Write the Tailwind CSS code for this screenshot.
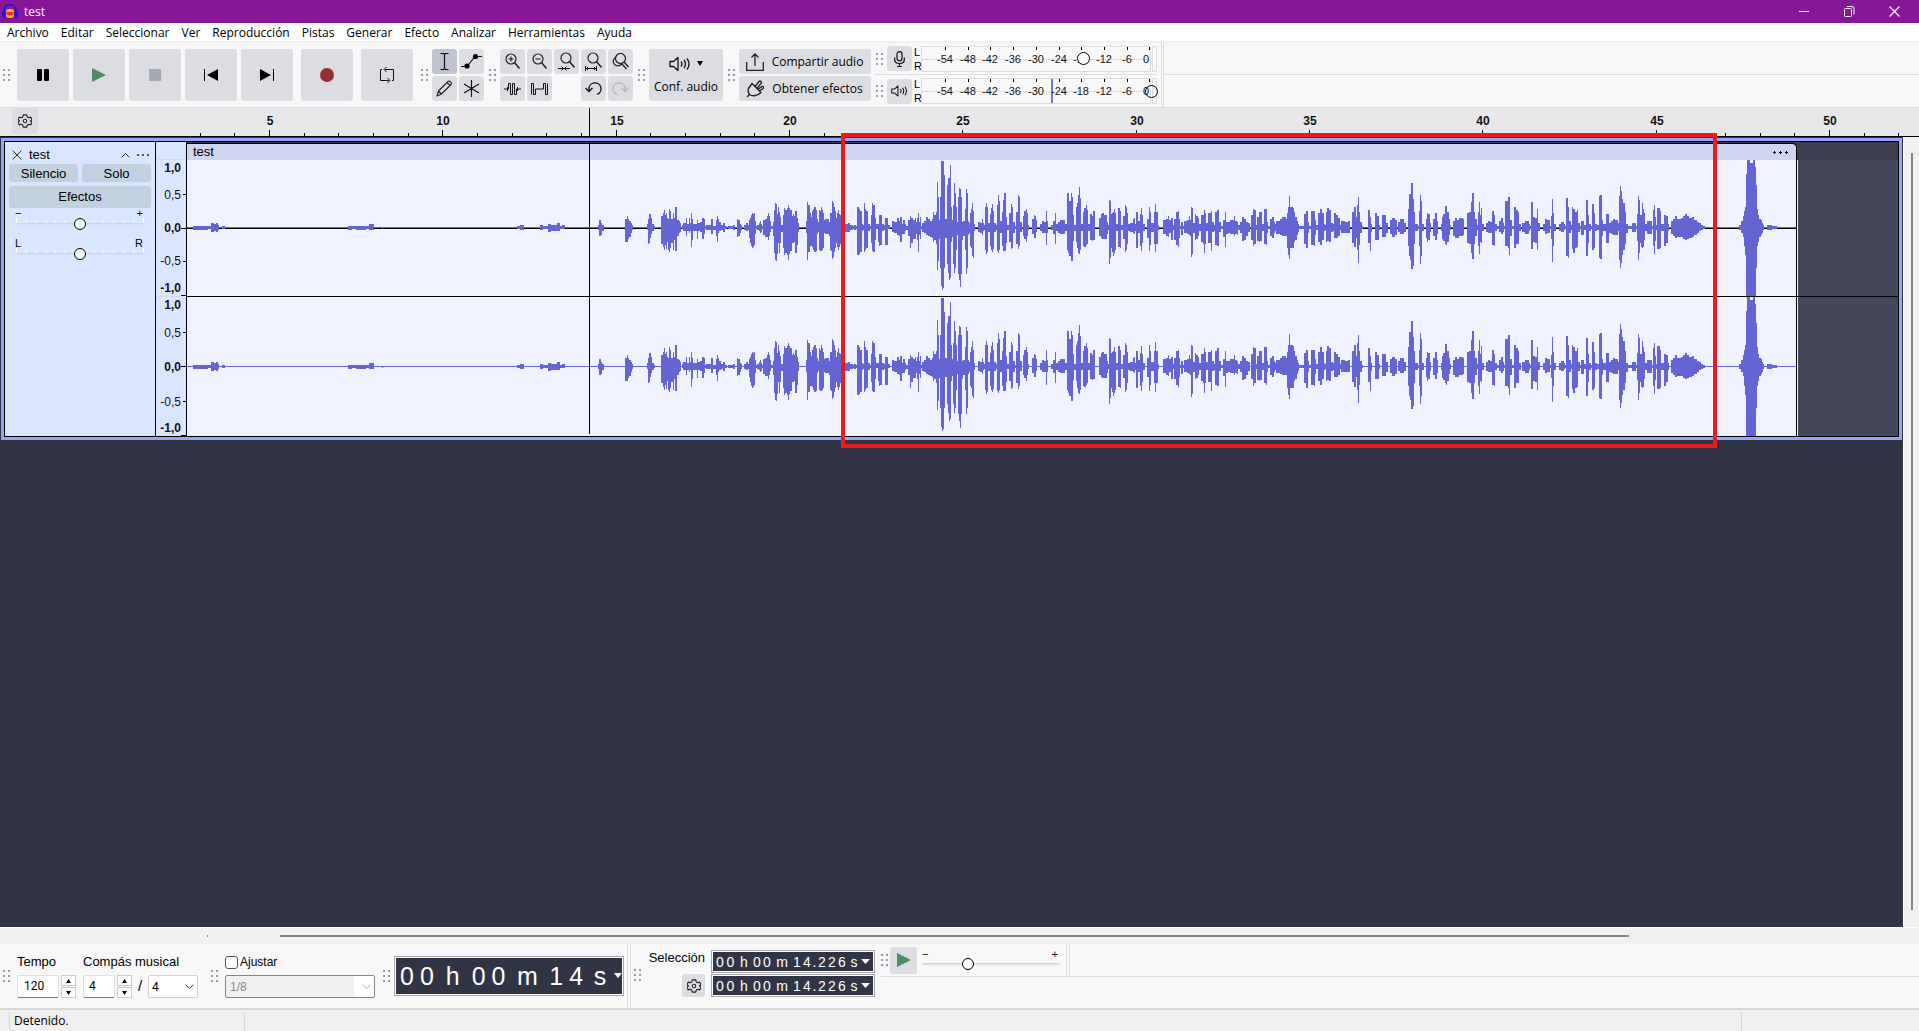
<!DOCTYPE html>
<html lang="es">

<head>
    <meta charset="UTF-8">
    <meta name="viewport" content="width=device-width, initial-scale=1.0">
    <title>test</title>
    <script src="https://cdn.jsdelivr.net/npm/@tailwindcss/browser@4"></script>
</head>

<body class="h-screen flex flex-col overflow-hidden bg-[#f0f0f0] text-black text-[12px] leading-4 font-['Open_Sans',sans-serif]">

    <!-- shared symbols -->
    <svg class="hidden">
        <symbol id="grip" viewBox="0 0 7 12">
            <path fill="#9a9ab0" d="M0 0h2v2h-2zM5 0h2v2h-2zM0 5h2v2h-2zM5 5h2v2h-2zM0 10h2v2h-2zM5 10h2v2h-2z" />
        </symbol>
        <symbol id="gear" viewBox="0 0 16 16">
            <path fill="none" stroke="#222" stroke-width="1.3" stroke-linejoin="round" d="M6 1h4l.6 2.300 1.800 1 2.200-.7 1.400 2.800L14.300 8l1.700 1.600-1.400 2.800-2.200-.7-1.800 1L10 15H6l-.6-2.300-1.800-1-2.200.7L0 9.600 1.700 8 0 6.400l1.400-2.800 2.200.7 1.800-1z" />
            <circle cx="8" cy="8" r="2" fill="none" stroke="#222" stroke-width="1.200" />
        </symbol>
        <symbol id="lens" viewBox="0 0 17 17">
            <circle cx="7" cy="6" r="5" fill="none" stroke="#222" stroke-width="1.200" />
            <path stroke="#222" stroke-width="1.500" d="M10.500 9.500l5 6" />
        </symbol>
        <symbol id="speaker" viewBox="0 0 22 16">
            <path fill="none" stroke="#111" stroke-width="1.300" stroke-linejoin="round" d="M1 5.500h3.500L9 1.500v13L4.500 10.500H1z" />
            <path fill="none" stroke="#111" stroke-width="1.300" d="M12 5.500q2 2.500 0 5M15 4q3 4 0 8M18 2.500q4 5.500 0 11" />
        </symbol>
        <symbol id="ticks" viewBox="0 0 131 5" preserveAspectRatio="none">
            <path stroke="#fff" d="M1.500 0v5M11.500 2v3M21.500 2v3M31.500 2v3M40.500 2v3M50.500 2v3M60.500 2v3M70.500 2v3M79.500 2v3M89.500 2v3M99.500 2v3M109.500 2v3M119.500 2v3M129.500 0v5" />
        </symbol>
    </svg>

    <header class="h-[23px] shrink-0 flex items-center bg-[#881798] text-white">
        <svg class="ml-[2px] w-4 h-[15px]" viewBox="0 0 16 15">
            <path fill="none" stroke="#1414e6" stroke-width="1.500" d="M2 8V7q0-6.200 6-6.200T14 7v1" />
            <path fill="#1414e6" d="M3.500 6.500v8Q0 14 0 10.500t3.500-4zM12.500 6.500v8q3.500-.5 3.500-4t-3.500-4z" />
            <rect x="4" y="5" width="8" height="9" rx="3" fill="#ffa51e" />
            <path stroke="#e6331e" stroke-width="3" d="M4.500 9.500h7" />
        </svg>
        <h1 class="ml-[6px] flex-1">test</h1>
        <button aria-label="Minimizar" class="w-[45px] h-full flex items-center justify-center"><svg class="w-[11px] h-[11px]" viewBox="0 0 11 11"><path stroke="#fff" d="M0 5.500h10" /></svg></button>
        <button aria-label="Restaurar" class="w-[45px] h-full flex items-center justify-center"><svg class="w-[11px] h-[11px]" viewBox="0 0 11 11"><path fill="none" stroke="#fff" d="M.5 3.500q0-1 1-1h5q1 0 1 1v6q0 1-1 1h-5q-1 0-1-1zM3 .5h5q2 0 2 2v6" /></svg></button>
        <button aria-label="Cerrar" class="mr-[2px] w-[45px] h-full flex items-center justify-center"><svg class="w-[11px] h-[11px]" viewBox="0 0 11 11"><path stroke="#fff" stroke-width="1.200" d="M.5.500l10 10M10.500.500l-10 10" /></svg></button>
    </header>

    <nav class="h-5 shrink-0 bg-white border-b-2 border-[#f0f0f0] flex items-end gap-3 pl-[7px]">
        <a href="#">Archivo</a>
        <a href="#">Editar</a>
        <a href="#">Seleccionar</a>
        <a href="#">Ver</a>
        <a href="#">Reproducción</a>
        <a href="#">Pistas</a>
        <a href="#">Generar</a>
        <a href="#">Efecto</a>
        <a href="#">Analizar</a>
        <a href="#">Herramientas</a>
        <a href="#">Ayuda</a>
    </nav>

    <section aria-label="Herramientas" class="h-[65px] shrink-0 flex items-stretch bg-[#f8f8f8] border-b border-[#dcdcde]">
        <div class="flex items-center">
            <svg class="ml-[3px] mr-[7px] w-[7px] h-3"><use href="#grip" /></svg>
            <div class="flex gap-1">
                <button aria-label="Pausa" class="w-[52px] h-[52px] rounded-[3px] bg-[#dcdde3] flex items-center justify-center"><svg class="w-3 h-3" viewBox="0 0 12 12"><rect width="5" height="12" rx="1" /><rect x="7" width="5" height="12" rx="1" /></svg></button>
                <button aria-label="Reproducir" class="w-[52px] h-[52px] rounded-[3px] bg-[#dcdde3] flex items-center justify-center"><svg class="w-[14px] h-[14px]" viewBox="0 0 14 14"><path fill="#4a8b69" d="M0 0l14 7-14 7z" /></svg></button>
                <button aria-label="Detener" class="w-[52px] h-[52px] rounded-[3px] bg-[#dcdde3] flex items-center justify-center"><svg class="w-3 h-3" viewBox="0 0 12 12"><rect width="12" height="12" fill="#a5a9b3" /></svg></button>
                <button aria-label="Ir al inicio" class="w-[52px] h-[52px] rounded-[3px] bg-[#dcdde3] flex items-center justify-center"><svg class="w-[14px] h-3" viewBox="0 0 14 12"><path d="M0 0h1v12H0zM14 0v12L3 6z" /></svg></button>
                <button aria-label="Ir al final" class="w-[52px] h-[52px] rounded-[3px] bg-[#dcdde3] flex items-center justify-center"><svg class="w-[14px] h-3" viewBox="0 0 14 12"><path d="M13 0h1v12h-1zM0 0v12l11-6z" /></svg></button>
            </div>
            <button aria-label="Grabar" class="ml-2 w-[52px] h-[52px] rounded-[3px] bg-[#dcdde3] flex items-center justify-center"><svg class="w-[14px] h-[14px]" viewBox="0 0 14 14"><circle cx="7" cy="7" r="7" fill="#942f32" /></svg></button>
            <button aria-label="Bucle" class="ml-2 w-[52px] h-[52px] rounded-[3px] bg-[#dcdde3] flex items-center justify-center"><svg class="w-4 h-4" viewBox="0 0 16 16"><path fill="none" stroke="#111" d="M3 2.500H1.500v11H10M8.500 11l2.500 2.500L8.500 16M13 13.500h1.500v-11H6M7.500 0L5 2.500 7.500 5" /></svg></button>

            <svg class="ml-2 mr-1 w-[7px] h-3"><use href="#grip" /></svg>
            <div class="grid grid-cols-2 gap-[2px]">
                <button aria-label="Herramienta de selección" class="size-[25px] rounded-[3px] bg-[#c0c2d0] flex items-center justify-center"><svg class="size-[19px]" viewBox="0 0 19 19"><path fill="none" stroke="#111" stroke-width="1.200" d="M5.500 1.500h3l1 1 1-1h3M9.500 2v15M5.500 17.500h3l1-1 1 1h3" /></svg></button>
                <button aria-label="Envolvente" class="size-[25px] rounded-[3px] bg-[#dcdde3] flex items-center justify-center"><svg class="size-[21px]" viewBox="0 0 21 21"><path fill="none" stroke="#111" stroke-width="1.200" d="M0 15.500h6l8-10h7" /><circle cx="6" cy="15" r="2.600" /><circle cx="14.500" cy="5.500" r="2.600" /></svg></button>
                <button aria-label="Dibujo" class="size-[25px] rounded-[3px] bg-[#dcdde3] flex items-center justify-center"><svg class="size-[17px]" viewBox="0 0 17 17"><path fill="none" stroke="#222" stroke-width="1.100" stroke-linejoin="round" d="M1 16l1.500-5L12 1.500q1-1 2 0l1 1q1 1 0 2L5.500 14zM2.500 11l3 3M11 2.500l3 3" /></svg></button>
                <button aria-label="Multiherramienta" class="size-[25px] rounded-[3px] bg-[#dcdde3] flex items-center justify-center"><svg class="size-[17px]" viewBox="0 0 17 17"><path stroke="#111" stroke-width="1.200" d="M8.500 0v17M1 4l15 9M16 4L1 13" /></svg></button>
            </div>

            <svg class="ml-[5px] mr-1 w-[7px] h-3"><use href="#grip" /></svg>
            <div class="grid grid-cols-5 gap-[2px]">
                <button aria-label="Acercar" class="size-[25px] rounded-[3px] bg-[#dcdde3] flex items-center justify-center"><svg class="size-[17px]" viewBox="0 0 17 17"><use href="#lens" width="17" height="17" /><path stroke="#111" d="M4.500 6h5M7 3.500v5" /></svg></button>
                <button aria-label="Alejar" class="size-[25px] rounded-[3px] bg-[#dcdde3] flex items-center justify-center"><svg class="size-[17px]" viewBox="0 0 17 17"><use href="#lens" width="17" height="17" /><path stroke="#111" d="M4.500 6h5" /></svg></button>
                <button aria-label="Ajustar selección" class="size-[25px] rounded-[3px] bg-[#dcdde3] flex items-center justify-center"><svg class="size-[19px]" viewBox="0 0 19 19"><use href="#lens" x="2" width="17" height="17" /><path fill="none" stroke="#111" d="M1 16.500h12M4.500 14.500l2 2-2 2M9.500 14.500l-2 2 2 2" /></svg></button>
                <button aria-label="Ajustar proyecto" class="size-[25px] rounded-[3px] bg-[#dcdde3] flex items-center justify-center"><svg class="size-[19px]" viewBox="0 0 19 19"><use href="#lens" x="2" width="17" height="17" /><path fill="none" stroke="#111" d="M1 16.500h12M1.500 14v5M12.500 14v5M4 15l-1.500 1.500L4 18M10 15l1.500 1.500L10 18" /></svg></button>
                <button aria-label="Alternar zoom" class="size-[25px] rounded-[3px] bg-[#dcdde3] flex items-center justify-center"><svg class="size-[17px]" viewBox="0 0 17 17"><circle cx="8.500" cy="5.500" r="5" fill="none" stroke="#222" stroke-width="1.200" /><path fill="none" stroke="#222" stroke-width="1.300" d="M12 9l4.500 5M4 4a4.600 4.600 0 1 0 5.500 7M9 10l5.500 6" /></svg></button>
                <button aria-label="Recortar" class="size-[25px] rounded-[3px] bg-[#dcdde3] flex items-center justify-center"><svg class="w-[17px] h-3" viewBox="0 0 17 12"><path fill="none" stroke="#111" stroke-linejoin="round" d="M0 6h3.500M3.500 4v4M3.500 6h1V.500h2v11h2V.500h2v11h2V6H17M13.500 4v4" /></svg></button>
                <button aria-label="Silenciar" class="size-[25px] rounded-[3px] bg-[#dcdde3] flex items-center justify-center"><svg class="w-[17px] h-3" viewBox="0 0 17 12"><path fill="none" stroke="#111" stroke-linejoin="round" d="M.5 11.500V.500h2v11h2V6h8V.500h2v11h2V.500" /></svg></button>
                <span></span>
                <button aria-label="Deshacer" class="size-[25px] rounded-[3px] bg-[#dcdde3] flex items-center justify-center"><svg class="w-[17px] h-[14px]" viewBox="0 0 17 14"><path fill="none" stroke="#111" stroke-width="1.300" d="M4 9V7a6 6 0 1 1 8 5.500M.500 6L4 9.500 7.500 6" /></svg></button>
                <button aria-label="Rehacer" disabled class="size-[25px] rounded-[3px] bg-[#dcdde3] flex items-center justify-center"><svg class="w-[17px] h-[14px]" viewBox="0 0 17 14"><path fill="none" stroke="#b4b5bb" stroke-width="1.300" d="M13 9V7a6 6 0 1 0-8 5.500M16.500 6L13 9.500 9.500 6" /></svg></button>
            </div>

            <svg class="ml-[5px] mr-1 w-[7px] h-3"><use href="#grip" /></svg>
            <button class="w-[74px] h-[52px] rounded-[3px] bg-[#dcdde3] flex flex-col items-center justify-center gap-[7px]">
                <span class="flex items-center gap-[6px]"><svg class="w-[22px] h-4"><use href="#speaker" /></svg><svg class="w-[6px] h-[5px]" viewBox="0 0 6 5"><path d="M0 0h6L3 5z" /></svg></span>
                <span class="whitespace-nowrap">Conf. audio</span>
            </button>

            <svg class="ml-[5px] mr-1 w-[7px] h-3"><use href="#grip" /></svg>
            <div class="flex flex-col gap-[2px]">
                <button class="w-[132px] h-[25px] rounded-[3px] bg-[#dcdde3] flex items-center pl-[7px]"><svg class="w-[18px] h-[18px]" viewBox="0 0 18 18"><path fill="none" stroke="#222" stroke-width="1.300" d="M.7 9v8.300h16.600V9M9 13V1M5.500 4.500L9 1l3.500 3.500" /></svg><span class="flex-1 text-center">Compartir audio</span></button>
                <button class="w-[132px] h-[25px] rounded-[3px] bg-[#dcdde3] flex items-center pl-[7px]"><svg class="w-[18px] h-[18px]" viewBox="0 0 18 18"><path fill="none" stroke="#222" stroke-width="1.400" stroke-linejoin="round" d="M1 17l2.500-2.500M6 3.500l9 9q-3 3-6.500 3.300-3 .2-5-1.300Q1.500 12 2.500 8.500L6 3.500zM9 6.500l4-5q1-1 2 0t0 2l-4 5M12 9.500l4-3q1-.5 1.500.5T16.500 9l-3 2" /></svg><span class="flex-1 text-center">Obtener efectos</span></button>
            </div>
        </div>

        <div class="ml-[3px] mr-1 flex flex-col font-['Liberation_Sans',sans-serif]">
            <div class="h-8 flex items-center border-b border-[#dcdcde]">
                <svg class="ml-[2px] mr-1 w-[7px] h-3"><use href="#grip" /></svg>
                <button aria-label="Nivel de grabación" class="size-[25px] rounded-[3px] bg-[#dcdde3] flex items-center justify-center"><svg class="w-[11px] h-4" viewBox="0 0 11 16"><rect x="3" y=".7" width="5" height="9" rx="2.500" fill="none" stroke="#111" stroke-width="1.200" /><path fill="none" stroke="#111" stroke-width="1.200" d="M.7 6.500v2q0 4 4.800 4t4.800-4v-2M5.500 12.500v3M3 15.500h5" /></svg></button>
                <div class="w-[9px] pl-[2px] text-[11px] leading-[14px]">L<br>R</div>
                <div class="relative">
                    <svg data-meter class="w-[236px] h-[26px]" viewBox="0 0 236 26"></svg>
                    <input type="range" aria-label="Volumen de grabación" min="0" max="1000" value="706" class="absolute left-0 top-0 w-[234px] h-[26px] appearance-none bg-transparent [&::-webkit-slider-thumb]:appearance-none [&::-webkit-slider-thumb]:size-[13px] [&::-webkit-slider-thumb]:rounded-full [&::-webkit-slider-thumb]:border [&::-webkit-slider-thumb]:border-black [&::-webkit-slider-thumb]:bg-white">
                </div>
            </div>
            <div class="h-8 flex items-center">
                <svg class="ml-[2px] mr-1 w-[7px] h-3"><use href="#grip" /></svg>
                <button aria-label="Nivel de reproducción" class="size-[25px] rounded-[3px] bg-[#dcdde3] flex items-center justify-center"><svg class="w-[17px] h-[14px]"><use href="#speaker" /></svg></button>
                <div class="w-[9px] pl-[2px] text-[11px] leading-[14px]">L<br>R</div>
                <div class="relative">
                    <svg data-meter="130" class="w-[236px] h-[26px]" viewBox="0 0 236 26"></svg>
                    <input type="range" aria-label="Volumen de reproducción" min="0" max="100" value="100" class="absolute left-0 top-0 w-[237px] h-[26px] appearance-none bg-transparent [&::-webkit-slider-thumb]:appearance-none [&::-webkit-slider-thumb]:size-[13px] [&::-webkit-slider-thumb]:rounded-full [&::-webkit-slider-thumb]:border [&::-webkit-slider-thumb]:border-black">
                </div>
            </div>
        </div>
        <div class="w-[3px] border-x border-[#dcdcde]"></div>
        <div class="flex-1"><div class="h-8 border-b border-[#dcdcde]"></div></div>
    </section>

    <div class="relative flex-1 min-h-0 flex flex-col">
        <!-- timeline -->
        <div class="relative h-[29px] shrink-0 bg-[#e8e8ea] border-b border-black">
            <button aria-label="Opciones de línea de tiempo" class="ml-3 w-[26px] h-[26px] rounded-[3px] bg-[#dcdde3] flex items-center justify-center"><svg class="w-[14px] h-[14px]"><use href="#gear" /></svg></button>
            <svg id="timeline" class="absolute inset-0 w-full h-full font-['Liberation_Sans',sans-serif] pointer-events-none"></svg>
        </div>

        <div class="flex-1 min-h-0 flex">
            <main class="flex-1 min-w-0 bg-[#313445] font-['Liberation_Sans',sans-serif] text-[13px]">
                <div class="mx-px mt-px border-[3px] border-[#97a5f8]">
                    <div class="flex border border-black bg-[#444659]">
                        <div class="w-[151px] shrink-0 border-r border-black bg-[#dae6ff] px-1 pt-1">
                            <div class="flex items-center h-[18px]">
                                <button aria-label="Cerrar pista" class="ml-[3px]"><svg class="w-[10px] h-[10px]" viewBox="0 0 10 10"><path stroke="#333" d="M.5.500l9 9M9.500.500l-9 9" /></svg></button>
                                <h2 class="ml-[7px] flex-1">test</h2>
                                <button aria-label="Contraer"><svg class="w-[9px] h-[6px]" viewBox="0 0 9 6"><path fill="none" stroke="#333" d="M.5 5.500l4-4 4 4" /></svg></button>
                                <button aria-label="Menú de pista" class="ml-[7px] mr-[2px]"><svg class="w-3 h-[2px]" viewBox="0 0 12 2"><path fill="#555" d="M0 0h2v2H0zM5 0h2v2H5zM10 0h2v2h-2z" /></svg></button>
                            </div>
                            <div class="flex gap-1">
                                <button class="flex-1 h-[18px] pt-[2px] rounded-[3px] bg-[#c2d1e0]">Silencio</button>
                                <button class="flex-1 h-[18px] pt-[2px] rounded-[3px] bg-[#c2d1e0]">Solo</button>
                            </div>
                            <button class="mt-1 w-full h-[22px] rounded-[3px] bg-[#c2d1e0]">Efectos</button>
                            <div class="px-[6px]">
                                <div class="flex justify-between text-[11px] leading-[10px]"><span>−</span><span class="pr-[2px]">+</span></div>
                                <div class="relative h-3">
                                    <svg class="w-full h-[5px]"><use href="#ticks" width="100%" height="5" /></svg>
                                    <input type="range" aria-label="Ganancia" class="absolute inset-0 w-full h-3 appearance-none bg-linear-to-b from-transparent from-[5px] via-[#c2d1e0] via-[5px] to-transparent to-[7px] [&::-webkit-slider-thumb]:appearance-none [&::-webkit-slider-thumb]:size-3 [&::-webkit-slider-thumb]:rounded-full [&::-webkit-slider-thumb]:border [&::-webkit-slider-thumb]:border-black [&::-webkit-slider-thumb]:bg-[#f8f8f8]">
                                </div>
                            </div>
                            <div class="mt-2 px-[6px]">
                                <div class="flex justify-between text-[11px] leading-[10px]"><span>L</span><span class="pr-[2px]">R</span></div>
                                <div class="relative h-3">
                                    <svg class="w-full h-[5px]"><use href="#ticks" width="100%" height="5" /></svg>
                                    <input type="range" aria-label="Panorama" class="absolute inset-0 w-full h-3 appearance-none bg-linear-to-b from-transparent from-[5px] via-[#c2d1e0] via-[5px] to-transparent to-[7px] [&::-webkit-slider-thumb]:appearance-none [&::-webkit-slider-thumb]:size-3 [&::-webkit-slider-thumb]:rounded-full [&::-webkit-slider-thumb]:border [&::-webkit-slider-thumb]:border-black [&::-webkit-slider-thumb]:bg-[#f8f8f8]">
                                </div>
                            </div>
                        </div>

                        <div class="w-[31px] shrink-0 border-r border-black bg-[#dae6ff]">
                            <svg id="scale" class="block w-[30px] h-[294px]" viewBox="0 0 30 294"></svg>
                        </div>

                        <div class="relative flex-1 min-w-0 bg-[#3c3d4e]">
                            <div class="mt-px h-[17px] border-t border-r border-black rounded-tr-[5px] bg-[#ced6f2] flex items-center justify-between pl-[6px] pr-2">
                                <h3>test</h3>
                                <button aria-label="Opciones de clip"><svg class="w-[15px] h-[3px]" viewBox="0 0 15 3"><path d="M1 0h1v1h1v1H2v1H1V2H0V1h1zM7 0h1v1h1v1H8v1H7V2H6V1h1zM13 0h1v1h1v1h-1v1h-1V2h-1V1h1z" /></svg></button>
                            </div>
                            <svg data-wave="67" data-gain="1" data-half="68" class="block w-full h-[136px] bg-[#f0f2ff] border-r border-black" viewBox="187 0 1609 136" preserveAspectRatio="none" shape-rendering="crispEdges"></svg>
                            <div class="h-px bg-black"></div>
                            <svg data-wave="69" data-gain="1.030" data-half="70" class="block w-full h-[139px] bg-[#f0f2ff] border-r border-black" viewBox="187 0 1609 139" preserveAspectRatio="none" shape-rendering="crispEdges"></svg>
                            <div class="absolute left-[402px] top-0 w-px h-[292px] bg-black"></div>
                        </div>
                        <div class="w-[101px] shrink-0">
                            <div class="h-[18px] bg-[#3c3d4e]"></div>
                            <div class="h-[136px] border-l border-[#f0f2ff]"></div>
                            <div class="h-px bg-black"></div>
                            <div class="h-[139px] border-l border-[#f0f2ff]"></div>
                        </div>
                    </div>
                </div>
            </main>
            <div class="w-4 shrink-0 border-l border-white bg-[#f0f0f0] flex justify-center pt-4 pb-[17px]"><div class="w-[2px] bg-[#868686]"></div></div>
        </div>

        <div class="h-[17px] shrink-0 border-t border-white bg-[#f0f0f0] flex items-center">
            <div class="ml-[207px] w-px h-[2px] bg-[#868886]"></div>
            <div class="ml-[72px] mr-[290px] flex-1 h-[2px] bg-[#868886]"></div>
        </div>

        <!-- highlighted range -->
        <div class="absolute left-[841px] right-[202px] top-[25px] h-[315px] border-4 border-[#e81c1c] pointer-events-none"></div>
    </div>

    <section aria-label="Tiempo" class="h-16 shrink-0 flex bg-[#f8f8f8] font-['Liberation_Sans',sans-serif] text-[13px]">
        <div class="flex items-center">
            <svg class="ml-[3px] mr-[7px] w-[7px] h-3"><use href="#grip" /></svg>
            <div class="w-[59px] mr-[7px]">
                <label for="tempo" class="block h-[21px]">Tempo</label>
                <div class="flex gap-[2px] text-[12px]">
                    <input id="tempo" value="120" class="w-[42px] h-[23px] pl-[6px] pb-px bg-white border border-[#e0e0e0] border-b-[#777] rounded-[2px] font-['Roboto',sans-serif]">
                    <div class="flex flex-col gap-px">
                        <button aria-label="Subir tempo" class="w-[15px] h-[11px] border border-[#ccc] bg-white flex items-center justify-center"><svg class="w-[5px] h-1" viewBox="0 0 5 4"><path d="M0 4h5L2.500 0z" /></svg></button>
                        <button aria-label="Bajar tempo" class="w-[15px] h-[11px] border border-[#ccc] bg-white flex items-center justify-center"><svg class="w-[5px] h-1" viewBox="0 0 5 4"><path d="M0 0h5L2.500 4z" /></svg></button>
                    </div>
                </div>
            </div>
            <div>
                <label for="beats" class="block h-[21px]">Compás musical</label>
                <div class="flex gap-[2px] text-[12px]">
                    <input id="beats" value="4" class="w-8 h-[23px] pl-[5px] pb-px bg-white border border-[#e0e0e0] border-b-[#777] rounded-[2px] font-['Roboto',sans-serif]">
                    <div class="flex flex-col gap-px">
                        <button aria-label="Subir compás" class="w-[15px] h-[11px] border border-[#ccc] bg-white flex items-center justify-center"><svg class="w-[5px] h-1" viewBox="0 0 5 4"><path d="M0 4h5L2.500 0z" /></svg></button>
                        <button aria-label="Bajar compás" class="w-[15px] h-[11px] border border-[#ccc] bg-white flex items-center justify-center"><svg class="w-[5px] h-1" viewBox="0 0 5 4"><path d="M0 0h5L2.500 4z" /></svg></button>
                    </div>
                    <span class="w-3 text-center text-[15px] leading-[22px]">/</span>
                    <div class="relative">
                        <select aria-label="Figura" class="block w-[50px] h-[23px] pl-[3px] appearance-none bg-white border border-[#d0d0d0] rounded-[2px] font-['Roboto',sans-serif]"><option>4</option></select>
                        <svg class="absolute right-1 top-[9px] w-[9px] h-[6px] pointer-events-none" viewBox="0 0 9 6"><path fill="none" stroke="#444" d="M.5.500l4 4 4-4" /></svg>
                    </div>
                </div>
            </div>

            <svg class="ml-[13px] mr-[7px] w-[7px] h-3"><use href="#grip" /></svg>
            <div>
                <div class="flex items-center h-[21px] pb-[5px] gap-[2px]">
                    <input id="snap" type="checkbox" class="size-[13px] appearance-none bg-white border border-[#555] rounded-[3px]">
                    <label for="snap" class="text-[12px]">Ajustar</label>
                </div>
                <div class="relative">
                    <select aria-label="Ajustar a" disabled class="block w-[150px] h-[23px] pl-1 appearance-none bg-white border border-[#868686] rounded-[2px] text-[#888] text-[12px] bg-linear-to-r from-[#f0f0f0] from-[128px] to-white to-[128px]"><option>1/8</option></select>
                    <svg class="absolute right-1 top-[9px] w-[9px] h-[6px] pointer-events-none" viewBox="0 0 9 6"><path fill="none" stroke="#bbb" d="M.5.500l4 4 4-4" /></svg>
                </div>
            </div>

            <svg class="ml-2 mr-1 w-[7px] h-3"><use href="#grip" /></svg>
            <div class="w-[230px] h-10 p-px border border-[#a6a6ac] bg-white">
                <div class="h-full pb-px bg-[#313445] text-white flex items-center pl-px text-[25px] leading-7 text-center">
                    <span class="w-5">0</span><span class="w-5">0</span><span class="w-8">h</span><span class="w-5">0</span><span class="w-5">0</span><span class="w-[38px]">m</span><span class="w-5">1</span><span class="w-5">4</span><span class="w-7">s</span>
                    <svg class="w-2 h-[5px]" viewBox="0 0 8 5"><path fill="#fff" d="M0 0h8L4 5z" /></svg>
                </div>
            </div>
        </div>
        <div class="ml-[3px] w-1 border-x border-[#dcdcde]"></div>

        <div class="flex items-start pt-[6px]">
            <svg class="mt-[19px] ml-[3px] mr-[7px] w-[7px] h-3"><use href="#grip" /></svg>
            <div class="w-[57px] flex flex-col items-end">
                <span class="h-6">Selección</span>
                <button aria-label="Opciones de selección" class="w-[23px] h-[23px] rounded-[2px] bg-[#dcdde3] flex items-center justify-center"><svg class="w-[14px] h-[14px]"><use href="#gear" /></svg></button>
            </div>
            <div class="ml-[6px] flex flex-col gap-px">
                <div class="w-[164px] h-[23px] p-px border border-[#a6a6ac] bg-white">
                    <div class="h-full bg-[#313445] text-white flex items-center pl-[2px] text-[14px] text-center">
                        <span class="w-[10px]">0</span><span class="w-[11px]">0</span><span class="w-4">h</span><span class="w-[10px]">0</span><span class="w-[10px]">0</span><span class="w-5">m</span><span class="w-[10px]">1</span><span class="w-[10px]">4</span><span class="w-[5px]">.</span><span class="w-[10px]">2</span><span class="w-[10px]">2</span><span class="w-[10px]">6</span><span class="w-[14px]">s</span>
                        <svg class="w-[9px] h-[5px]" viewBox="0 0 9 5"><path fill="#fff" d="M0 0h9L4.500 5z" /></svg>
                    </div>
                </div>
                <div class="w-[164px] h-[23px] p-px border border-[#a6a6ac] bg-white">
                    <div class="h-full bg-[#313445] text-white flex items-center pl-[2px] text-[14px] text-center">
                        <span class="w-[10px]">0</span><span class="w-[11px]">0</span><span class="w-4">h</span><span class="w-[10px]">0</span><span class="w-[10px]">0</span><span class="w-5">m</span><span class="w-[10px]">1</span><span class="w-[10px]">4</span><span class="w-[5px]">.</span><span class="w-[10px]">2</span><span class="w-[10px]">2</span><span class="w-[10px]">6</span><span class="w-[14px]">s</span>
                        <svg class="w-[9px] h-[5px]" viewBox="0 0 9 5"><path fill="#fff" d="M0 0h9L4.500 5z" /></svg>
                    </div>
                </div>
            </div>
        </div>

        <div class="ml-[6px] flex-1 h-[33px] flex border-b border-[#dcdcde]">
            <div class="flex items-center">
                <svg class="mr-[2px] w-[7px] h-3"><use href="#grip" /></svg>
                <button aria-label="Reproducir a velocidad" class="size-[27px] rounded-[3px] bg-[#dcdde3] flex items-center justify-center"><svg class="w-[14px] h-[14px]" viewBox="0 0 14 14"><path fill="#4a8b69" d="M0 0l14 7-14 7z" /></svg></button>
                <div class="ml-[5px] w-[138px]">
                    <div class="flex justify-between text-[11px] leading-[8px]"><span>−</span><span class="pr-[2px]">+</span></div>
                    <div class="relative h-[13px]">
                        <svg class="w-full h-[5px]"><use href="#ticks" width="100%" height="5" /></svg>
                        <input type="range" aria-label="Velocidad" value="32" class="absolute inset-0 w-full h-[13px] appearance-none bg-linear-to-b from-transparent from-[5px] via-[#c2d1e0] via-[5px] to-transparent to-[8px] [&::-webkit-slider-thumb]:appearance-none [&::-webkit-slider-thumb]:size-3 [&::-webkit-slider-thumb]:rounded-full [&::-webkit-slider-thumb]:border [&::-webkit-slider-thumb]:border-black [&::-webkit-slider-thumb]:bg-[#f8f8f8]">
                    </div>
                </div>
            </div>
            <div class="ml-[6px] w-1 border-x border-[#dcdcde]"></div>
        </div>
    </section>

    <footer class="h-[23px] shrink-0 border-t-2 border-[#d8d8d8] bg-[#f0f0f0] flex pt-[2px]">
        <div class="ml-[9px] w-[236px] border-x border-[#d8d8d8] pl-1 leading-[18px]">Detenido.</div>
        <div class="flex-1"></div>
        <div class="w-[178px] border-l border-[#d8d8d8]"></div>
    </footer>

    <script>
        // Each entry is "x,up,down": the level holds until the next x. A missing pair means silence.
        const peaks = `193,1,2 208,1,1 211,4,4 214,3,3 216,4,4 218,2,2 219 222,1,1 225 348,1,2 352,1,1 356,1,2 366,1,1 369,3,2 374 382,0,1 383 517,1,1 520,2,2 524 540,2,2 543,1,1 548,3,4 551,2,3 557,4,3 560,1,1 562,2,1 565
        598,2,2 599,7,8 601,4,7 602,2,3 604 625,8,14 627,11,14 628,8,11 629,6,9 631,4,5 632,2,2 633 647,3,2 648,8,16 649,13,15 650,13,10 651,9,6 652,3,3 654,1,1 655
        661,11,16 663,14,19 664,17,22 665,12,17 666,14,21 667,9,14 668,8,22 669,18,24 670,16,20 671,8,15 673,14,22 674,9,12 675,20,23 677,7,8 679,6,5 680,4,4 681 682,2,1 683,4,3 686,9,8 687,3,3 689,9,5 690,4,3 691,14,19 692,8,12 693,3,3 697,7,11 698,4,3 700,5,4 702,9,11 704,8,6 705,1,1 706,2,2 711,8,6 713,1,2 716,7,8 717,11,14 718,8,5 719,5,3 721,2,2 723,4,4 725,1,1 727 728,1,1 733,2,2 735
        737,8,9 738,7,8 740,3,5 741,2,2 742 744,2,2 746,4,3 748,2,2 749,7,10 750,9,15 751,12,18 752,14,20 753,13,19 754,14,17 755,6,6 756,1,1 757,2,2 759,4,3 760,6,5 761,3,4 762,1,1 763,7,7 765,8,9 767,11,9 768,14,12 769,11,8 770,6,4 771,1,1
        773,5,8 774,17,25 775,24,32 776,23,33 777,13,26 778,20,15 779,15,25 780,10,15 781,2,4 783,12,20 784,19,27 785,17,25 787,19,27 788,22,32 789,19,26 790,17,23 792,11,15 793,13,15 794,11,14 795,16,25 797,9,17 798,4,4 799
        806,6,5 807,25,32 808,22,24 810,14,18 811,10,18 812,16,19 813,18,22 814,20,24 816,17,23 817,8,6 818,5,4 819,17,22 820,16,23 821,20,23 822,17,22 823,14,20 824,7,5 825,8,6 829,5,8 830,14,22 831,14,23 832,26,31 833,24,29 834,20,24 835,16,20 836,9,15 837,14,19 838,17,22 839,13,19 840,12,16 841,16,22 843,8,6 845,3,4 848,4,4 850,2,2 853,1,1 854,2,2 856,1,1
        857,20,27 859,18,26 860,16,24 862,3,3 863,2,2 864,24,24 865,18,22 866,16,20 868,3,3 870,1,1 871,12,15 872,24,23 873,22,24 875,9,12 876,3,1 878,3,14 879,12,18 880,12,17 882,3,3 884,2,2 885,9,17 888,2,1 890
        892,6,4 894,5,5 897,9,7 899,6,8 900,10,14 902,3,6 903,7,6 905,3,3 906,1,2 908,7,8 910,11,20 911,9,15 913,7,11 915,9,11 916,5,6 917,9,12 918,14,24 919,5,7 920,10,11 921,1,1 922,4,4 924,6,5 926,10,7 928,8,8 930,6,9 932,8,10 933,15,14 934,12,12 936,15,16 937,45,42 938,30,33 939,7,11 940,30,40 941,66,58 942,66,62 943,66,60 944,52,40 945,8,10 947,42,36 948,49,45 949,49,52 950,62,50 951,20,14 952,7,9 953,22,36 954,44,45 955,34,40 956,20,22 957,5,7 958,30,46 959,39,52 960,38,59 961,30,46 962,5,12 963,6,8 965,18,22 966,38,46 967,34,40 968,6,7 969,4,5 970,14,18 971,18,20 972,24,28 973,16,30 974,3,3 975
        978,5,4 980,4,5 982,8,7 983,4,3 984,2,2 985,20,22 986,24,26 987,20,24 988,4,4 990,13,18 991,19,22 992,23,24 993,16,21 994,4,4 996,2,2 997,22,23 998,32,25 999,26,22 1000,6,5 1002,15,18 1003,27,23 1004,34,23 1006,10,15 1007,2,2 1009,14,14 1011,23,21 1012,20,20 1013,5,5 1015,1,1 1016,15,16 1018,32,21 1019,30,18 1020,5,4 1022 1023,11,8 1024,16,11 1026,18,14 1027,14,8 1028,2,2 1029 1032,8,6 1034,12,10 1035,11,10 1036,7,4 1037
        1040,3,3 1042,6,5 1044,5,5 1046,16,17 1047,6,5 1048 1051,2,2 1053,6,6 1055,14,16 1056,3,3 1058,5,5 1060,7,6 1065,3,3 1067,34,22 1068,34,25 1069,26,28 1071,34,33 1072,30,33 1073,12,13 1074,2,3 1076,20,14 1077,24,20 1078,32,25 1079,40,26 1080,29,22 1081,3,3 1083,15,18 1084,19,19 1086,22,17 1087,17,16 1088,3,3 1090,13,12 1092,11,13 1093,16,12 1095
        1099,9,8 1101,13,10 1102,14,11 1104,12,11 1107,5,6 1108,2,2 1109,27,36 1110,26,30 1111,13,20 1112,14,24 1113,15,28 1114,18,25 1115,14,22 1116,3,3 1118,19,19 1120,16,20 1121,2,2 1123,11,11 1125,22,24 1126,20,22 1127,14,16 1128,3,3 1130,4,4 1133,8,5 1134,9,6 1135,3,3 1136,15,20 1138,6,5 1140,13,18 1141,19,23 1142,12,15 1143,3,3 1145 1147,8,10 1149,20,23 1150,15,17 1151,4,4 1154,15,16 1155,23,24 1156,15,16 1158,2,2 1159
        1163,7,6 1166,8,8 1168,11,9 1169,7,5 1171,9,12 1173,2,2 1174,8,12 1176,15,17 1178,16,19 1179,8,10 1180,1,1 1181,5,7 1183,1,1 1184,6,5 1187,7,6 1189,11,7 1190,7,8 1191,20,29 1192,19,26 1193,4,5 1195,13,12 1196,11,11 1198,9,8 1199,3,3 1201,12,14 1203,12,16 1204,17,25 1205,14,16 1206,4,3 1208,14,15 1211,16,23 1212,5,4 1214,2,3 1215,15,17 1217,17,18 1219,5,4 1221,1,1 1223,7,9 1225,15,19 1226,5,6 1228,5,5 1230,7,6 1234,11,8 1235,6,6 1237,5,7 1238,2,2 1240,5,5 1242,10,13 1244,8,12 1246,5,8 1248,4,4 1250
        1251,12,12 1253,18,18 1254,17,16 1256,2,2 1257,10,13 1259,15,14 1260,15,13 1262,3,3 1264,18,16 1266,18,17 1267,5,5 1268,1,1 1270,8,8 1272,10,10 1274,5,5 1275,3,3 1276,6,6 1280,8,7 1282,10,8 1286,8,8 1287,14,20 1288,20,27 1289,31,31 1290,20,20 1293,19,20 1294,15,14 1295,10,12 1297,6,7 1298,3,4 1299,1,1 1304,13,16 1306,16,20 1308,5,5 1309,1,1 1311,16,17 1314,16,18 1315,7,7 1316,2,2 1318,14,14 1320,18,17 1322,14,12 1324,3,3 1325,2,2 1326,15,14 1327,19,13 1329,17,14 1331,4,4 1333,3,3 1334,14,10 1336,12,10 1338,9,8 1340,2,2 1341,6,5 1345,5,5 1348,6,5 1350
        1352,15,15 1354,20,19 1356,10,10 1357,22,22 1358,30,35 1359,15,17 1360,5,5 1362,1,1 1363 1368,17,15 1370,10,23 1371,3,4 1372 1375,14,12 1377,11,12 1379,2,2 1380 1382,12,9 1386,4,5 1388 1390,7,6 1392,9,9 1395,7,7 1397 1398,5,4 1400,8,6 1404,4,4 1406 1408,18,18 1409,33,28 1410,33,32 1411,44,41 1413,28,38 1414,15,16 1415,3,3 1418,1,1 1419,16,18 1420,32,36 1421,26,28 1422,3,3 1424 1426,8,10 1427,14,14 1428,13,12 1430,4,4 1431 1433,8,8 1435,14,12 1437,6,6 1438
        1441,3,3 1442,10,11 1443,13,13 1445,21,16 1446,21,17 1447,15,14 1449,8,7 1450,2,2 1451 1453,6,8 1455,9,10 1457,7,10 1459,9,8 1463,8,7 1464 1467,14,15 1469,15,16 1471,25,25 1472,34,31 1474,15,16 1475,8,8 1477,2,2 1478,15,18 1479,25,26 1480,12,14 1481,19,15 1482,3,3 1484 1486,4,4 1488,6,5 1490,5,5 1492,16,17 1494,12,18 1495,3,3 1497,1,1 1499,6,4 1501,9,6 1503,4,4 1504,1,1 1505,26,18 1508,30,20 1509,30,27 1510,7,8 1512,1,1 1514,20,20 1516,17,16 1518,15,16 1519,3,3 1521 1522,4,4 1525,6,6 1529,3,3 1530,1,1 1531,25,21 1533,10,14 1535,9,15 1537,18,22 1538,4,3 1540
        1543,3,3 1545,8,6 1547,7,5 1550,1,1 1551,11,11 1552,28,34 1553,14,18 1554,3,3 1556 1559,3,3 1561,5,4 1564,3,2 1565,1,1 1566,29,28 1568,20,30 1569,6,5 1571,2,2 1572,20,21 1573,18,25 1575,15,20 1577,17,19 1578,4,4 1580,1,1 1581,6,7 1584,2,2 1586,27,28 1588,12,15 1589,3,3 1591,1,1 1592,23,22 1594,14,20 1595,3,3 1597,2,2 1599,31,30 1600,32,31 1602,7,8 1603,3,3 1606,13,15 1609,4,5 1611,6,6 1613,8,7 1615,7,7 1618,4,3 1619,31,32 1620,41,40 1621,36,35 1622,28,27 1623,24,22 1625,15,16 1626,3,5 1628,1,1 1632,4,4 1636,1,1
        1637,13,13 1638,31,32 1639,27,25 1640,12,15 1641,12,19 1642,24,20 1643,18,19 1644,14,12 1645,3,3 1647,6,6 1652,1,1 1653,17,18 1654,22,26 1655,10,13 1656,2,2 1657,19,21 1660,16,20 1661,3,3 1664,12,18 1666,11,15 1668,3,3 1669 1671,6,6 1673,8,8 1675,11,10 1677,8,9 1681,9,9 1683,11,11 1685,13,12 1687,11,11 1689,9,10 1692,10,9 1694,7,7 1697,5,5 1699,4,3 1701,2,2 1703,1,1 1705
        1739,2,2 1741,6,5 1743,11,9 1744,16,18 1745,20,27 1746,53,68 1747,68,68 1750,64,68 1753,68,68 1755,60,68 1756,42,40 1757,18,18 1758,12,14 1759,8,9 1761,7,7 1762,4,5 1763,2,2 1764 1767,2,2 1772,1,1 1777`
            .trim().split(/\s+/).map(p => p.split(',').map(Number));

        document.querySelectorAll('[data-wave]').forEach(svg => {
            const mid = Number(svg.dataset.wave);
            const gain = Number(svg.dataset.gain);
            const half = Number(svg.dataset.half);
            let d = '';
            peaks.forEach(([x, up, down], i) => {
                if (up === undefined || i + 1 >= peaks.length) return;
                const top = mid - Math.min(half, Math.round(up * gain));
                const bottom = mid + 1 + Math.min(half, Math.round(down * gain));
                d += `M${x} ${top}H${peaks[i + 1][0]}V${bottom}H${x}z`;
            });
            const zero = gain === 1 ? `<path fill="#000" d="M187 ${mid + 1}h1609v1H187z"/>` : '';
            svg.innerHTML = `${zero}<path fill="#6464d2" d="M187 ${mid}h1609v1H187z${d}"/>`;
        });

        // Timeline: one second every 34.67 px
        let marks = '';
        for (let s = 3; s <= 52; s++) {
            const x = Math.round(269 + (s - 5) * 34.67);
            const major = s % 5 === 0;
            marks += `<rect x="${x}" y="${major ? 22 : 25}" width="1" height="${major ? 6 : 3}"/>`;
            if (major) marks += `<text x="${x + 1}" y="17" text-anchor="middle" font-size="12" font-weight="bold" fill="#111">${s}</text>`;
        }
        document.getElementById('timeline').innerHTML = marks + '<rect x="589" width="1" height="28"/>';

        // Amplitude scale of both channels
        const labels = [['1,0', 30], ['0,5', 57, 52], ['0,0', 90, 86], ['-0,5', 123, 119], ['-1,0', 150, 153], ['1,0', 167], ['0,5', 195, 190], ['0,0', 229, 224], ['-0,5', 264, 259], ['-1,0', 290, 293]];
        document.getElementById('scale').innerHTML = labels.map(([text, y, tick]) => {
            const bold = !text.endsWith('5');
            return `<text x="25" y="${y}" text-anchor="end" font-size="12" font-weight="${bold ? 'bold' : 'normal'}" fill="#111">${text}</text>`
                + (tick ? `<rect x="${bold ? 25 : 27}" y="${tick}" width="5" height="1"/>` : '');
        }).join('') + '<path fill="#d8d8e4" d="M0 17h30v1H0zM0 154h25v1H0z"/>';

        document.querySelectorAll('[data-meter]').forEach(svg => {
            let out = '<path fill="none" stroke="#dcdcde" d="M.5.500h229v25H.5zM1 13.500h229M231.500.500h4v25h-4z"/>';
            if (svg.dataset.meter) out += `<rect x="${svg.dataset.meter}" y="1" width="2" height="24" fill="#6a7be0"/>`;
            for (let i = 0; i < 10; i++) {
                const x = Math.round(24 + i * 22.7);
                const db = -54 + i * 6;
                out += `<rect x="${x}" y="1" width="1" height="3"/><text x="${i === 9 ? x - 3 : x}" y="17" text-anchor="middle" font-size="11" fill="#111">${db}</text>`;
            }
            svg.innerHTML = out;
        });
    </script>
</body>

</html>
